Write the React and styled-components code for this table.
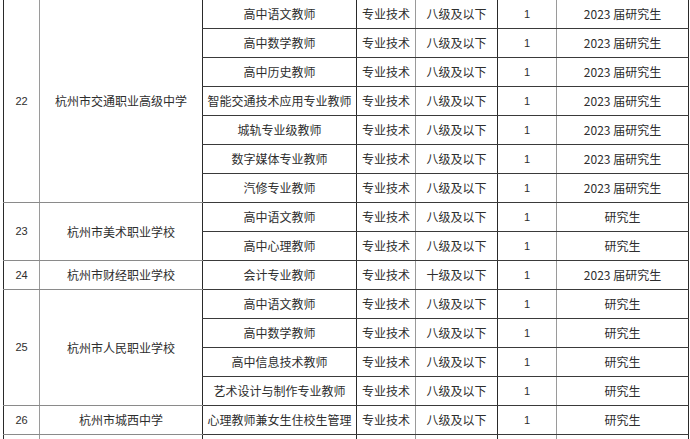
import React from "react";
import styled, { createGlobalStyle } from "styled-components";

const GlobalStyle = createGlobalStyle`
  html, body {
    margin: 0;
    padding: 0;
    background: #ffffff;
    overflow: hidden;
  }
  body {
    font-family: "Noto Sans CJK SC", "Liberation Sans", sans-serif;
    color: #2b2b2b;
  }
`;

const Page = styled.div`
  width: 690px;
  height: 439px;
  overflow: hidden;
  padding-left: 3px;
  box-sizing: border-box;
`;

const Table = styled.table`
  border-collapse: collapse;
  table-layout: fixed;
  width: 685px;
  font-size: 12px;
`;

const widths = [36, 163, 154, 59, 82, 59, 132];

// which vertical lines are drawn lighter in the scan
const lightLeft = [false, true, false, false, true, false, true];

const Cell = styled.td`
  height: 28px;
  padding: 0;
  text-align: center;
  vertical-align: middle;
  line-height: 1;
  white-space: nowrap;
  overflow: hidden;
  border-top: 1px solid ${(p) => (p.$col < 2 ? "#8a8a8a" : "#3a3a3a")};
  border-bottom: 1px solid ${(p) => (p.$col < 2 ? "#8a8a8a" : "#3a3a3a")};
  border-left: 1px solid ${(p) => (lightLeft[p.$col] ? "#9a9a9a" : "#2a2a2a")};
  border-right: ${(p) => (p.$col === 6 ? "1px solid #2a2a2a" : "none")};
  font-size: ${(p) => (p.$num ? "11px" : "12px")};
  font-family: ${(p) =>
    p.$num ? '"Liberation Sans", sans-serif' : '"Noto Sans CJK SC", "Liberation Sans", sans-serif'};
  color: #2e2e2e;
`;

const Row = styled.tr`
  &:first-child td {
    border-top: none;
  }
`;

const groups = [
  {
    no: "22",
    school: "杭州市交通职业高级中学",
    jobs: [
      ["高中语文教师", "八级及以下", "2023 届研究生"],
      ["高中数学教师", "八级及以下", "2023 届研究生"],
      ["高中历史教师", "八级及以下", "2023 届研究生"],
      ["智能交通技术应用专业教师", "八级及以下", "2023 届研究生"],
      ["城轨专业级教师", "八级及以下", "2023 届研究生"],
      ["数字媒体专业教师", "八级及以下", "2023 届研究生"],
      ["汽修专业教师", "八级及以下", "2023 届研究生"],
    ],
  },
  {
    no: "23",
    school: "杭州市美术职业学校",
    jobs: [
      ["高中语文教师", "八级及以下", "研究生"],
      ["高中心理教师", "八级及以下", "研究生"],
    ],
  },
  {
    no: "24",
    school: "杭州市财经职业学校",
    jobs: [["会计专业教师", "十级及以下", "2023 届研究生"]],
  },
  {
    no: "25",
    school: "杭州市人民职业学校",
    jobs: [
      ["高中语文教师", "八级及以下", "研究生"],
      ["高中数学教师", "八级及以下", "研究生"],
      ["高中信息技术教师", "八级及以下", "研究生"],
      ["艺术设计与制作专业教师", "八级及以下", "研究生"],
    ],
  },
  {
    no: "26",
    school: "杭州市城西中学",
    jobs: [["心理教师兼女生住校生管理", "八级及以下", "研究生"]],
  },
];

export default function App() {
  return (
    <Page>
      <GlobalStyle />
      <Table>
        <colgroup>
          {widths.map((w, i) => (
            <col key={i} style={{ width: w }} />
          ))}
        </colgroup>
        <tbody>
          {groups.map((g) =>
            g.jobs.map((job, i) => (
              <Row key={g.no + "-" + i}>
                {i === 0 && (
                  <>
                    <Cell $col={0} $num rowSpan={g.jobs.length}>
                      {g.no}
                    </Cell>
                    <Cell $col={1} rowSpan={g.jobs.length}>
                      {g.school}
                    </Cell>
                  </>
                )}
                <Cell $col={2}>{job[0]}</Cell>
                <Cell $col={3}>专业技术</Cell>
                <Cell $col={4}>{job[1]}</Cell>
                <Cell $col={5} $num>
                  1
                </Cell>
                <Cell $col={6}>{job[2]}</Cell>
              </Row>
            ))
          )}
          <Row>
            {widths.map((w, i) => (
              <Cell key={i} $col={i} />
            ))}
          </Row>
        </tbody>
      </Table>
    </Page>
  );
}
